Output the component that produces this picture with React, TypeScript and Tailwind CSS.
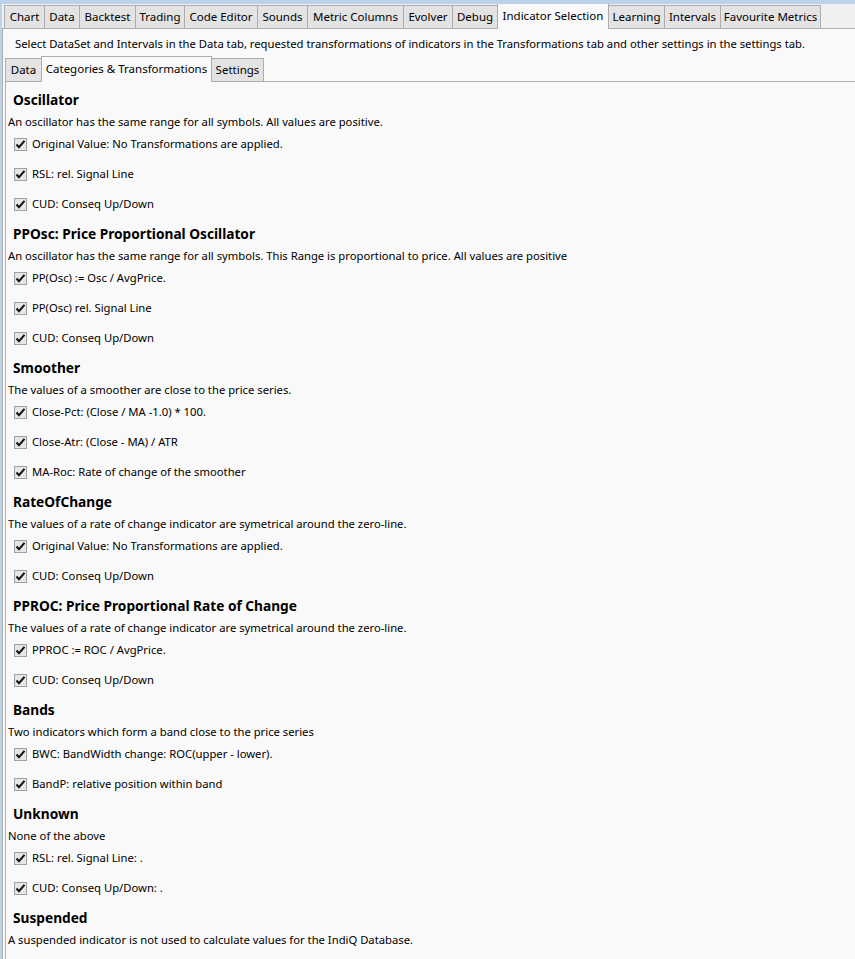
import React from "react";

interface Section {
  title: string;
  desc: string;
  items: string[];
}

const outerTabs: { label: string; w: number }[] = [
  { label: "Chart", w: 41 },
  { label: "Data", w: 36 },
  { label: "Backtest", w: 57 },
  { label: "Trading", w: 50 },
  { label: "Code Editor", w: 74 },
  { label: "Sounds", w: 51 },
  { label: "Metric Columns", w: 97 },
  { label: "Evolver", w: 50 },
  { label: "Debug", w: 46 },
  { label: "Indicator Selection", w: 112 },
  { label: "Learning", w: 57 },
  { label: "Intervals", w: 57 },
  { label: "Favourite Metrics", w: 101 },
];

const innerTabs: { label: string; w: number }[] = [
  { label: "Data", w: 37 },
  { label: "Categories & Transformations", w: 171 },
  { label: "Settings", w: 53 },
];

const sections: Section[] = [
  {
    title: "Oscillator",
    desc: "An oscillator has the same range for all symbols. All values are positive.",
    items: ["Original Value: No Transformations are applied.", "RSL: rel. Signal Line", "CUD: Conseq Up/Down"],
  },
  {
    title: "PPOsc: Price Proportional Oscillator",
    desc: "An oscillator has the same range for all symbols. This Range is proportional to price. All values are positive",
    items: ["PP(Osc) := Osc / AvgPrice.", "PP(Osc) rel. Signal Line", "CUD: Conseq Up/Down"],
  },
  {
    title: "Smoother",
    desc: "The values of a smoother are close to the price series.",
    items: ["Close-Pct: (Close / MA -1.0) * 100.", "Close-Atr: (Close - MA) / ATR", "MA-Roc: Rate of change of the smoother"],
  },
  {
    title: "RateOfChange",
    desc: "The values of a rate of change indicator are symetrical around the zero-line.",
    items: ["Original Value: No Transformations are applied.", "CUD: Conseq Up/Down"],
  },
  {
    title: "PPROC: Price Proportional Rate of Change",
    desc: "The values of a rate of change indicator are symetrical around the zero-line.",
    items: ["PPROC := ROC / AvgPrice.", "CUD: Conseq Up/Down"],
  },
  {
    title: "Bands",
    desc: "Two indicators which form a band close to the price series",
    items: ["BWC: BandWidth change: ROC(upper - lower).", "BandP: relative position within band"],
  },
  {
    title: "Unknown",
    desc: "None of the above",
    items: ["RSL: rel. Signal Line: .", "CUD: Conseq Up/Down: ."],
  },
  {
    title: "Suspended",
    desc: "A suspended indicator is not used to calculate values for the IndiQ Database.",
    items: [],
  },
];

const Check = () => (
  <span className="w-[13px] h-[13px] border border-[#a0a0a0] bg-[#e6e6e6] flex items-center justify-center shrink-0">
    <svg width="11" height="11" viewBox="0 0 11 11">
      <path d="M1.5 5.5 L4 8.2 L9.5 1.8" fill="none" stroke="#111" strokeWidth="2" />
    </svg>
  </span>
);

const Tab = ({ label, w, active }: { label: string; w: number; active: boolean }) => (
  <div
    style={{ width: w }}
    className={`flex items-center justify-center whitespace-nowrap border border-[#adadad] -ml-px first:ml-0 ${
      active
        ? "h-[26px] bg-[#f9f9f9] border-b-0 relative z-10 pb-[2px]"
        : "h-[23px] bg-[#e3e3e3] mb-[1px] border-b-0"
    }`}
  >
    {label}
  </div>
);

export default function App() {
  return (
    <div
      className="w-[855px] h-[959px] overflow-hidden bg-[#f0f0f0] border-t-4 border-l-2 border-[#bcd2ea] text-[11.25px] text-black flex flex-col"
      style={{ fontFamily: '"Noto Sans", "Liberation Sans", sans-serif' }}
    >
      <div className="flex items-end h-[25px] pl-[2px] shrink-0 text-[11.5px]">
        {outerTabs.map((t) => (
          <Tab key={t.label} label={t.label} w={t.w} active={t.label === "Indicator Selection"} />
        ))}
      </div>
      <div className="flex-1 border-t border-l border-[#adadad] bg-[#f9f9f9] flex flex-col -mt-px">
        <div className="h-[28px] flex items-center pl-[12px] pt-[3px] shrink-0 whitespace-nowrap">
          Select DataSet and Intervals in the Data tab, requested transformations of indicators in the Transformations tab and other settings in the settings tab.
        </div>
        <div className="flex items-end h-[25px] pl-[2px] shrink-0 text-[11.5px]">
          {innerTabs.map((t) => (
            <Tab key={t.label} label={t.label} w={t.w} active={t.label === "Categories & Transformations"} />
          ))}
        </div>
        <div className="flex-1 ml-[2px] border-t border-l border-[#adadad] -mt-px pt-[7px]">
          {sections.map((s) => (
            <div key={s.title}>
              <div className="h-[22px] flex items-center pl-[7px] font-bold text-[13.7px]">{s.title}</div>
              <div className="h-[22px] flex items-center pl-[2px]">{s.desc}</div>
              {s.items.map((it) => (
                <div key={it} className="h-[30px]">
                  <div className="h-[22px] flex items-center gap-[5px] pl-[8px]">
                    <Check />
                    <span>{it}</span>
                  </div>
                </div>
              ))}
            </div>
          ))}
        </div>
      </div>
    </div>
  );
}
